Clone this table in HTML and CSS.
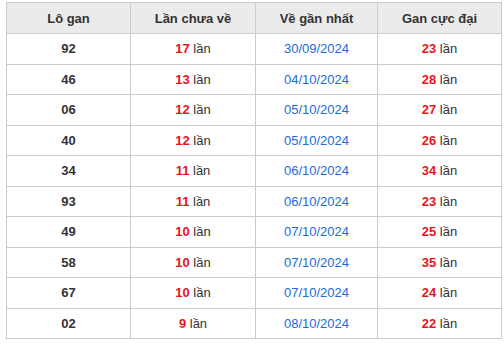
FILE: index.html
```html
<!DOCTYPE html>
<html lang="vi">
<head>
    <meta charset="UTF-8">
    <meta name="viewport" content="width=device-width, initial-scale=1.0">
    <title>Lô gan</title>
    <link rel="stylesheet" href="styles.css">
</head>
<body>

    <table class="gan-table">
        <colgroup>
            <col class="c1">
            <col class="c2">
            <col class="c3">
            <col class="c4">
        </colgroup>
        <thead>
            <tr>
                <th>Lô gan</th>
                <th>Lần chưa về</th>
                <th>Về gần nhất</th>
                <th>Gan cực đại</th>
            </tr>
        </thead>
        <tbody>
            <tr><td class="num">92</td><td><b class="red">17</b> lần</td><td class="date">30/09/2024</td><td><b class="red">23</b> lần</td></tr>
            <tr><td class="num">46</td><td><b class="red">13</b> lần</td><td class="date">04/10/2024</td><td><b class="red">28</b> lần</td></tr>
            <tr><td class="num">06</td><td><b class="red">12</b> lần</td><td class="date">05/10/2024</td><td><b class="red">27</b> lần</td></tr>
            <tr><td class="num">40</td><td><b class="red">12</b> lần</td><td class="date">05/10/2024</td><td><b class="red">26</b> lần</td></tr>
            <tr><td class="num">34</td><td><b class="red">11</b> lần</td><td class="date">06/10/2024</td><td><b class="red">34</b> lần</td></tr>
            <tr><td class="num">93</td><td><b class="red">11</b> lần</td><td class="date">06/10/2024</td><td><b class="red">23</b> lần</td></tr>
            <tr><td class="num">49</td><td><b class="red">10</b> lần</td><td class="date">07/10/2024</td><td><b class="red">25</b> lần</td></tr>
            <tr><td class="num">58</td><td><b class="red">10</b> lần</td><td class="date">07/10/2024</td><td><b class="red">35</b> lần</td></tr>
            <tr><td class="num">67</td><td><b class="red">10</b> lần</td><td class="date">07/10/2024</td><td><b class="red">24</b> lần</td></tr>
            <tr><td class="num">02</td><td><b class="red">9</b> lần</td><td class="date">08/10/2024</td><td><b class="red">22</b> lần</td></tr>
        </tbody>
    </table>

</body>
</html>
```
FILE: styles.css
```css
body {
    margin: 0;
    padding: 2px 0 0 6px;
    background-color: #fff;
    color: #333;
    font-family: "Liberation Sans", Arial, sans-serif;
    font-size: 13px;
}
.gan-table {
    width: 495px;
    border-collapse: collapse;
    table-layout: fixed;
}
.c1 { width: 124px; }
.c2 { width: 125px; }
.c3 { width: 122px; }
.c4 { width: 124px; }
th, td {
    border: 1px solid #ccc;
    text-align: center;
    padding: 0;
}
th {
    height: 30px;
    background-color: #ebebeb;
    font-weight: bold;
    color: #333;
}
td {
    height: 29.5px;
}
.num {
    font-weight: bold;
}
.red {
    color: #e8141c;
}
.date {
    color: #1a6cd8;
}
```
